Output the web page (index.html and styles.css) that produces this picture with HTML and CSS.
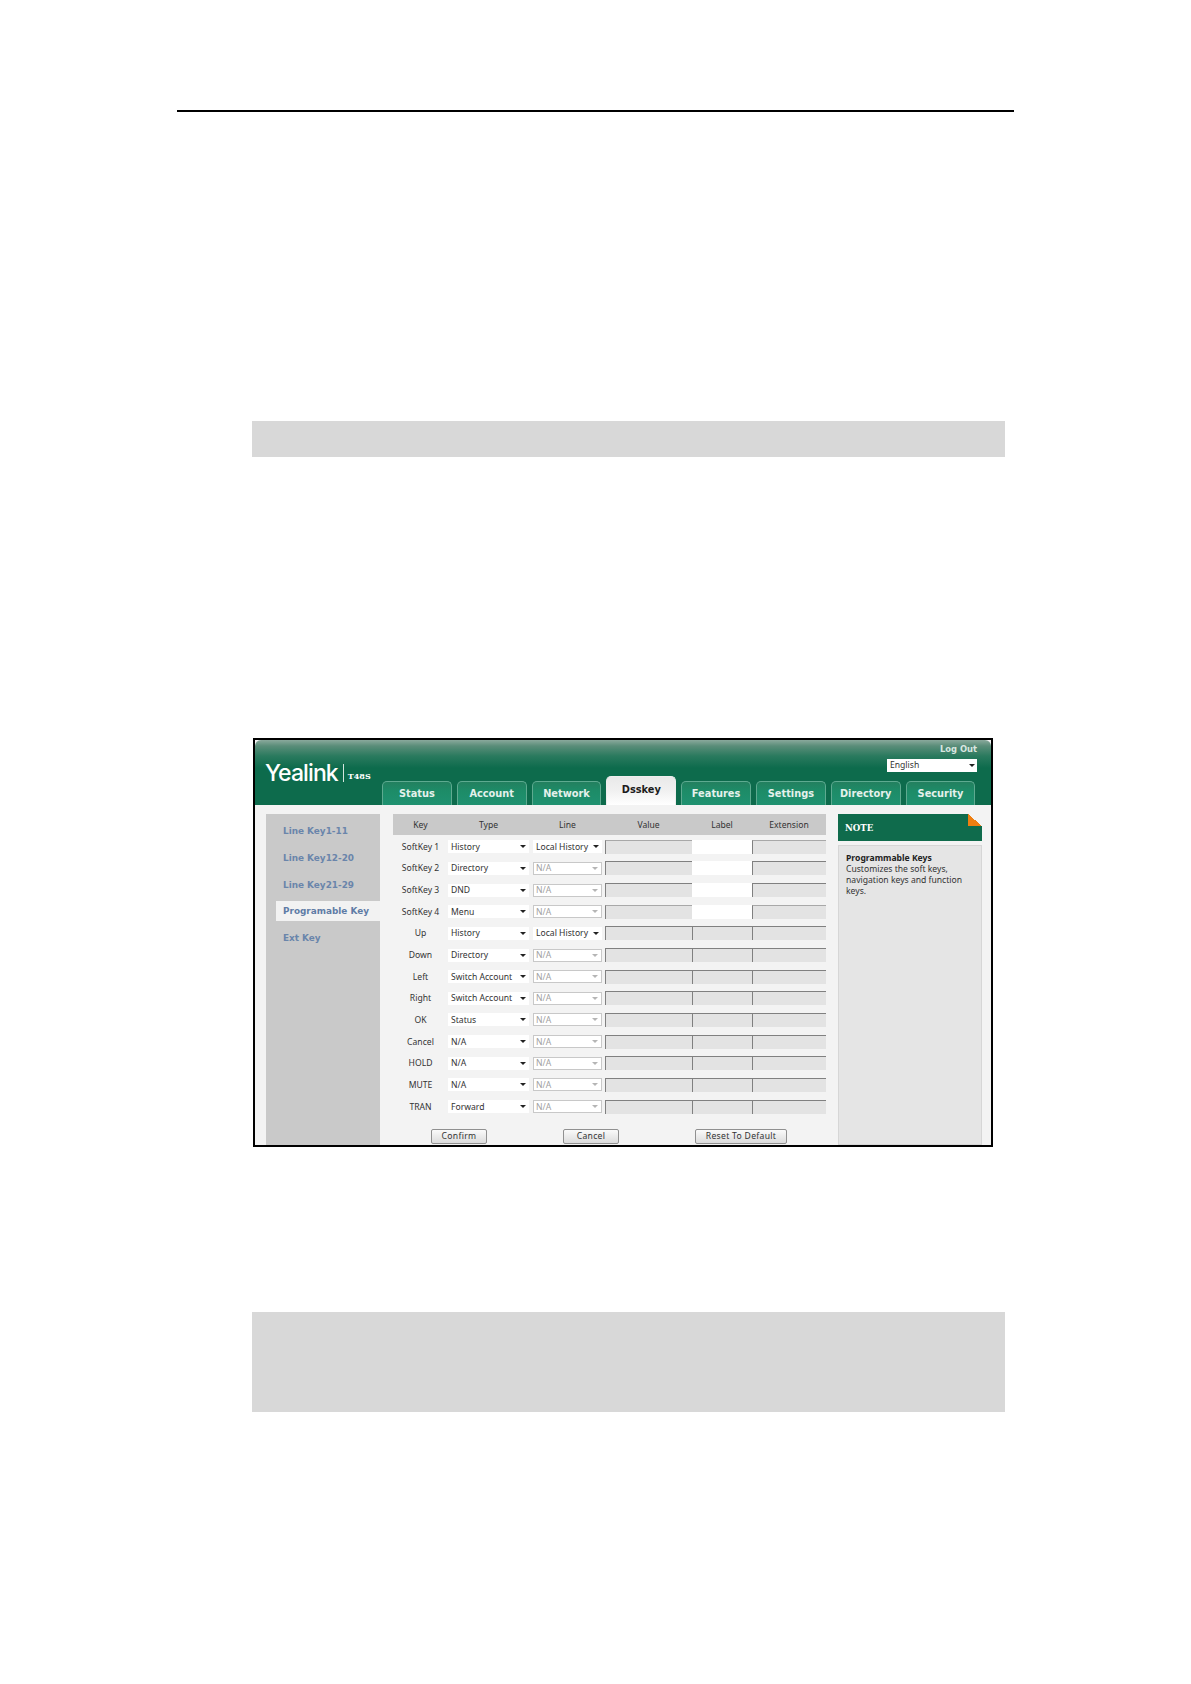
FILE: index.html
```html
<!doctype html>
<html>
<head>
  <meta charset="utf-8">
  <title>Programmable Keys</title>
  <link rel="stylesheet" href="styles.css">
</head>
<body>

<div class="rule"></div>
<div class="band band-short"></div>

<div class="frame">
  <div class="top">
    <div class="logo">
      <span class="logo-name">Yealink</span>
      <span class="logo-model">T48S</span>
    </div>
    <div class="top-right">
      <a class="logout">Log Out</a>
      <div class="lang">English<i class="arrow"></i></div>
      <div class="tabs">
        <a class="tab">Status</a>
        <a class="tab">Account</a>
        <a class="tab">Network</a>
        <a class="tab active">Dsskey</a>
        <a class="tab">Features</a>
        <a class="tab">Settings</a>
        <a class="tab">Directory</a>
        <a class="tab">Security</a>
      </div>
    </div>
  </div>

  <div class="main">
    <ul class="side">
      <li>Line Key1-11</li>
      <li>Line Key12-20</li>
      <li>Line Key21-29</li>
      <li class="current">Programable Key</li>
      <li>Ext Key</li>
    </ul>

    <div class="keys">
      <div class="row head">
        <span>Key</span><span class="c-type">Type</span><span class="c-line">Line</span><span>Value</span><span>Label</span><span>Extension</span>
      </div>

      <div class="row">
        <span class="key">SoftKey 1</span>
        <div class="sel c-type">History<i class="arrow"></i></div>
        <div class="sel c-line">Local History<i class="arrow"></i></div>
        <div class="box faint"></div><div class="box on"></div><div class="box faint"></div>
      </div>
      <div class="row">
        <span class="key">SoftKey 2</span>
        <div class="sel c-type">Directory<i class="arrow"></i></div>
        <div class="sel c-line off">N/A<i class="arrow"></i></div>
        <div class="box"></div><div class="box on"></div><div class="box"></div>
      </div>
      <div class="row">
        <span class="key">SoftKey 3</span>
        <div class="sel c-type">DND<i class="arrow"></i></div>
        <div class="sel c-line off">N/A<i class="arrow"></i></div>
        <div class="box"></div><div class="box on"></div><div class="box"></div>
      </div>
      <div class="row">
        <span class="key">SoftKey 4</span>
        <div class="sel c-type">Menu<i class="arrow"></i></div>
        <div class="sel c-line off">N/A<i class="arrow"></i></div>
        <div class="box faint"></div><div class="box on"></div><div class="box faint"></div>
      </div>
      <div class="row">
        <span class="key">Up</span>
        <div class="sel c-type">History<i class="arrow"></i></div>
        <div class="sel c-line">Local History<i class="arrow"></i></div>
        <div class="box"></div><div class="box"></div><div class="box"></div>
      </div>
      <div class="row">
        <span class="key">Down</span>
        <div class="sel c-type">Directory<i class="arrow"></i></div>
        <div class="sel c-line off">N/A<i class="arrow"></i></div>
        <div class="box"></div><div class="box"></div><div class="box"></div>
      </div>
      <div class="row">
        <span class="key">Left</span>
        <div class="sel c-type">Switch Account<i class="arrow"></i></div>
        <div class="sel c-line off">N/A<i class="arrow"></i></div>
        <div class="box"></div><div class="box"></div><div class="box"></div>
      </div>
      <div class="row">
        <span class="key">Right</span>
        <div class="sel c-type">Switch Account<i class="arrow"></i></div>
        <div class="sel c-line off">N/A<i class="arrow"></i></div>
        <div class="box"></div><div class="box"></div><div class="box"></div>
      </div>
      <div class="row">
        <span class="key">OK</span>
        <div class="sel c-type">Status<i class="arrow"></i></div>
        <div class="sel c-line off">N/A<i class="arrow"></i></div>
        <div class="box"></div><div class="box"></div><div class="box"></div>
      </div>
      <div class="row">
        <span class="key">Cancel</span>
        <div class="sel c-type">N/A<i class="arrow"></i></div>
        <div class="sel c-line off">N/A<i class="arrow"></i></div>
        <div class="box"></div><div class="box"></div><div class="box"></div>
      </div>
      <div class="row">
        <span class="key">HOLD</span>
        <div class="sel c-type">N/A<i class="arrow"></i></div>
        <div class="sel c-line off">N/A<i class="arrow"></i></div>
        <div class="box"></div><div class="box"></div><div class="box"></div>
      </div>
      <div class="row">
        <span class="key">MUTE</span>
        <div class="sel c-type">N/A<i class="arrow"></i></div>
        <div class="sel c-line off">N/A<i class="arrow"></i></div>
        <div class="box"></div><div class="box"></div><div class="box"></div>
      </div>
      <div class="row">
        <span class="key">TRAN</span>
        <div class="sel c-type">Forward<i class="arrow"></i></div>
        <div class="sel c-line off">N/A<i class="arrow"></i></div>
        <div class="box"></div><div class="box"></div><div class="box"></div>
      </div>

      <div class="buttons">
        <button class="btn">Confirm</button>
        <button class="btn">Cancel</button>
        <button class="btn wide">Reset To Default</button>
      </div>
    </div>

    <div class="note">
      <div class="note-head">NOTE</div>
      <div class="note-body">
        <b>Programmable Keys</b><br>
        Customizes the soft keys,<br>
        navigation keys and function<br>
        keys.
      </div>
    </div>
  </div>
</div>

<div class="band band-tall"></div>

</body>
</html>
```

FILE: styles.css
```css
html, body {
  margin: 0;
  padding: 0;
  background-color: #fff;
}

body {
  padding-top: 110px;
  height: 1574px;
  overflow: hidden;
}

.rule {
  width: 837px;
  height: 2px;
  margin-left: 177px;
  background-color: #000;
}

.band {
  margin-left: 252px;
  width: 753px;
  background-color: #d8d8d8;
}

.band-short {
  height: 36px;
  margin-top: 309px;
}

.band-tall {
  height: 100px;
  margin-top: 165px;
}

/* screenshot frame */

.frame {
  box-sizing: border-box;
  width: 740px;
  height: 409px;
  margin: 281px 0 0 253px;
  border: 2px solid #000;
  background-color: #f3f3f3;
  overflow: hidden;
  display: flex;
  flex-direction: column;
  font-family: "Noto Sans", sans-serif;
  font-size: 8.6px;
  color: #333;
}

.top {
  height: 65px;
  flex: none;
  display: flex;
  border-radius: 6px 6px 0 0;
  background: linear-gradient(#8aa99c 0, #5a8d79 6px, #2a7a5e 16px, #0d6b4c 28px, #0d6b4c 100%);
}

.logo {
  width: 127px;
  flex: none;
  box-sizing: border-box;
  padding: 20px 0 0 10px;
  display: flex;
  align-items: flex-start;
  color: #fff;
}

.logo-name {
  font-family: Inter, sans-serif;
  font-size: 23px;
  line-height: 26px;
  font-weight: 500;
  letter-spacing: -0.9px;
  padding-right: 5px;
}

.logo-model {
  margin-top: 4px;
  padding: 7px 0 0 4px;
  border-left: 1px solid #d5e5de;
  height: 11px;
  font-family: "DejaVu Serif", serif;
  font-size: 8px;
  line-height: 10px;
  font-weight: bold;
}

.top-right {
  flex: 1;
  display: flex;
  flex-direction: column;
  align-items: flex-end;
  padding-right: 14px;
}

.logout {
  margin-top: 3px;
  font-family: "DejaVu Sans", sans-serif;
  font-size: 8.4px;
  line-height: 12px;
  font-weight: bold;
  color: #d9e6e0;
}

.lang {
  box-sizing: border-box;
  width: 90px;
  height: 13px;
  margin-top: 3.5px;
  padding: 0 2px 0 3px;
  line-height: 13px;
  background-color: #fff;
  display: flex;
  align-items: center;
  justify-content: space-between;
}

.tabs {
  align-self: flex-start;
  margin-top: auto;
  display: flex;
  align-items: flex-end;
  gap: 5px;
}

.tab {
  box-sizing: border-box;
  width: 69.8px;
  height: 24px;
  text-align: center;
  line-height: 23px;
  font-family: "DejaVu Sans", sans-serif;
  font-size: 9.8px;
  font-weight: bold;
  color: #e4f1ec;
  border: 1px solid #5eaa90;
  border-bottom: none;
  border-radius: 5px 5px 0 0;
  background: linear-gradient(#23805f, #1d8c68 40%, #1f9170);
}

.tab.active {
  height: 29px;
  line-height: 25px;
  color: #1c1c1c;
  border-color: #eee;
  background: linear-gradient(#e9e9e9, #f1f1f1 50%, #fff);
}

/* content */

.main {
  flex: 1;
  display: flex;
  padding: 9px 0 0 11px;
  min-height: 0;
  background-color: #f3f3f3;
}

.side {
  width: 114px;
  flex: none;
  margin: 0;
  padding: 7px 0 0;
  list-style: none;
  background-color: #c9c9c9;
  font-family: "DejaVu Sans", sans-serif;
  font-size: 8.9px;
  font-weight: bold;
  color: #6a85ab;
}

.side li {
  height: 20px;
  line-height: 20px;
  margin: 0 0 6.8px 10px;
  padding-left: 7px;
}

.side li.current {
  background-color: #f2f2f2;
  color: #5f7ca6;
}

.keys {
  width: 433px;
  flex: none;
  margin-left: 13px;
}

.row {
  display: grid;
  grid-template-columns: 55px 85px 72px 87px 60px 74px;
  height: 21.65px;
  align-items: center;
}

.row.head {
  height: 21px;
  margin-bottom: 1px;
  background-color: #c9c9c9;
  text-align: center;
}

.c-type {
  margin-right: 4px;
}

.c-line {
  margin-right: 3px;
}

.key {
  text-align: center;
}

.sel {
  box-sizing: border-box;
  height: 13px;
  padding: 0 3px 0 3px;
  line-height: 12px;
  background-color: #fff;
  display: flex;
  align-items: center;
  justify-content: space-between;
  white-space: nowrap;
}

.sel.off {
  border: 1px solid #c8c8c8;
  padding-left: 2px;
  color: #a0a0a0;
}

.arrow {
  width: 0;
  height: 0;
  border-left: 3px solid transparent;
  border-right: 3px solid transparent;
  border-top: 3px solid #222;
}

.off .arrow {
  border-top-color: #b5b5b5;
}

.box {
  box-sizing: border-box;
  height: 14px;
  background-color: #e3e3e3;
  border-top: 1.5px solid #808080;
  border-left: 1.5px solid #808080;
}

.box.faint {
  border-top-color: #a8a8a8;
}

.box.on {
  background-color: #fff;
  border: none;
}

.buttons {
  display: flex;
  gap: 76px;
  margin: 11.5px 0 0 38px;
}

.btn {
  box-sizing: border-box;
  width: 56px;
  height: 15px;
  padding: 0;
  border: 1px solid #909090;
  border-radius: 2px;
  background: linear-gradient(#fafafa, #dcdcdc);
  font-family: "Noto Sans", sans-serif;
  font-size: 8.6px;
  line-height: 12px;
  letter-spacing: 0.3px;
  color: #333;
}

.btn.wide {
  width: 92px;
}

.note {
  width: 144px;
  flex: none;
  margin-left: 12px;
  display: flex;
  flex-direction: column;
}

.note-head {
  position: relative;
  height: 27px;
  flex: none;
  box-sizing: border-box;
  padding-left: 7px;
  line-height: 28px;
  background-color: #0f6b4c;
  color: #fff;
  font-family: "DejaVu Serif", serif;
  font-size: 8.6px;
  font-weight: bold;
}

/* orange folded corner */
.note-head::after {
  content: "";
  position: absolute;
  top: 0;
  right: 0;
  width: 14px;
  height: 12px;
  background: linear-gradient(to top right, #ee7f12 50%, #f3f3f3 50%);
}

.note-body {
  flex: 1;
  box-sizing: border-box;
  margin-top: 4px;
  padding: 7px 7px 0;
  border: 1px solid #d6d6d6;
  background-color: #e5e5e5;
  line-height: 11px;
  color: #333;
}

.note-body b {
  color: #222;
}
```
